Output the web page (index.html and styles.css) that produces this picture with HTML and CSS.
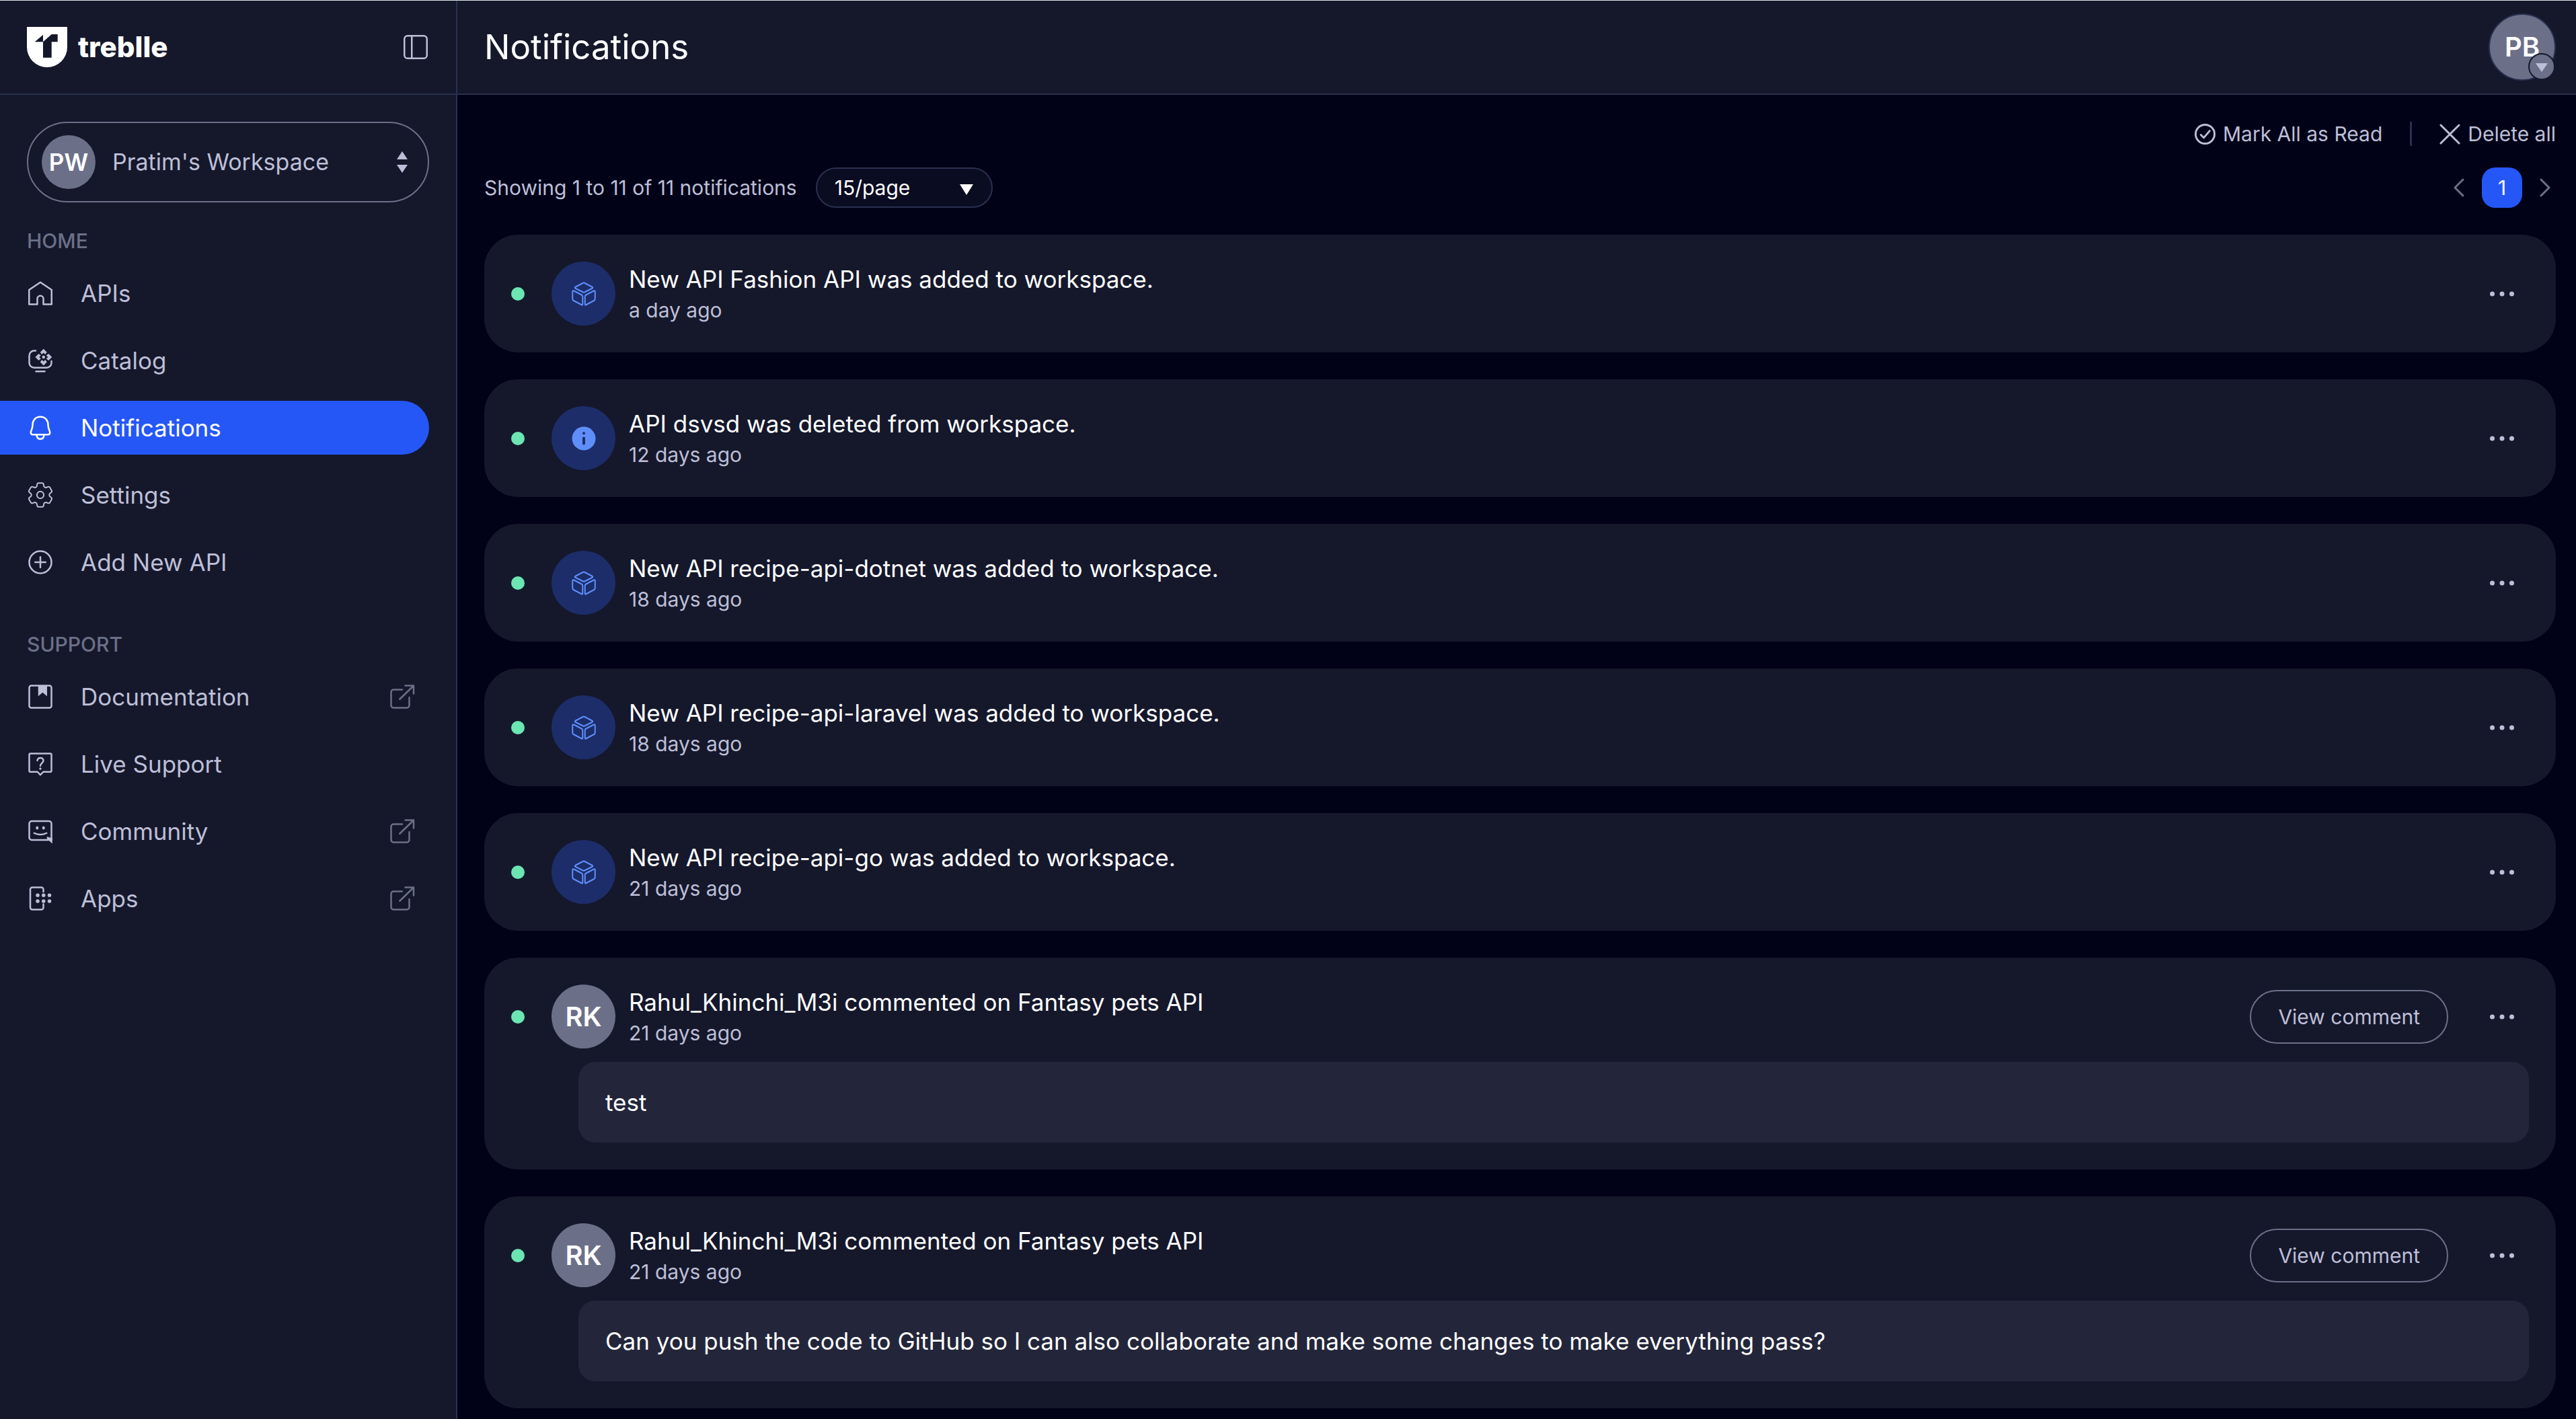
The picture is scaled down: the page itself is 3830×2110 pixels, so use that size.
FILE: index.html
```html
<!DOCTYPE html>
<html lang="en">
<head>
<meta charset="utf-8">
<title>Notifications - Treblle</title>
<link rel="stylesheet" href="styles.css">
</head>
<body>
<svg class="sprite" aria-hidden="true">
  <symbol id="i-home" viewBox="0 0 16 16"><path d="M8 1.5 14.7 6v8.6H9.8v-3.3a1.8 1.8 0 0 0-3.6 0v3.3H1.3V6Z"/></symbol>
  <symbol id="i-catalog" viewBox="0 0 16 16"><path d="M5.2 2.2H4.3a2.9 2.9 0 0 0-2.9 2.9v4.3a2.9 2.9 0 0 0 2.9 2.9h7.4a2.9 2.9 0 0 0 2.9-2.9V8.4M5.4 14.5h5.2"/><g class="solid"><path d="m9.9 1.1 2 2-1 1.3-1-1-1 1-1-1.3ZM9.900 11l2-2.100-1-1.300-1 1-1-1-1 1.300ZM5 6l2-2 1.300 1-1 1 1 1L7 8ZM14.900 6l-2-2-1.400 1 1 1-1 1 1.400 1Z"/><circle cx="9.900" cy="6" r=".9"/></g></symbol>
  <symbol id="i-bell" viewBox="0 0 16 16"><path d="M8 1.5C5 1.5 3.4 3.7 3.4 6.3c0 2.5-1.1 3.5-1.1 4.6 0 .7.5 1.2 1.2 1.2h9c.7 0 1.2-.5 1.2-1.2 0-1.1-1.1-2.1-1.1-4.6C12.6 3.7 11 1.5 8 1.5ZM5.9 12.9c.2 1.1 1.1 1.8 2.1 1.8s1.900-.7 2.100-1.800"/></symbol>
  <symbol id="i-gear" viewBox="1.9 1.9 20.200 20.200"><path d="M9.594 3.94c.09-.542.56-.94 1.11-.94h2.593c.55 0 1.02.398 1.11.94l.213 1.281c.063.374.313.686.645.87.074.04.147.083.22.127.325.196.72.257 1.075.124l1.217-.456a1.125 1.125 0 0 1 1.37.49l1.296 2.247a1.125 1.125 0 0 1-.26 1.431l-1.003.827c-.293.241-.438.613-.43.992a7.723 7.723 0 0 1 0 .255c-.008.378.137.75.43.991l1.004.827c.424.35.534.955.26 1.43l-1.298 2.247a1.125 1.125 0 0 1-1.369.491l-1.217-.456c-.355-.133-.75-.072-1.076.124a6.47 6.47 0 0 1-.22.128c-.331.183-.581.495-.644.869l-.213 1.281c-.09.543-.56.94-1.11.94h-2.594c-.55 0-1.019-.398-1.11-.94l-.213-1.281c-.062-.374-.312-.686-.644-.87a6.52 6.52 0 0 1-.22-.127c-.325-.196-.72-.257-1.076-.124l-1.217.456a1.125 1.125 0 0 1-1.369-.49l-1.297-2.247a1.125 1.125 0 0 1 .26-1.431l1.004-.827c.292-.24.437-.613.43-.991a6.932 6.932 0 0 1 0-.255c.007-.38-.138-.751-.43-.992l-1.004-.827a1.125 1.125 0 0 1-.26-1.43l1.297-2.247a1.125 1.125 0 0 1 1.37-.491l1.216.456c.356.133.751.072 1.076-.124.072-.044.146-.086.22-.128.332-.183.582-.495.644-.869l.214-1.28Z"/><circle cx="12" cy="12" r="2.6"/></symbol>
  <symbol id="i-plus" viewBox="0 0 16 16"><circle cx="8" cy="8" r="6.600"/><path d="M8 4.900v6.200M4.900 8h6.200"/></symbol>
  <symbol id="i-doc" viewBox="0 0 16 16"><rect x="1.400" y="1.400" width="13.200" height="13.200" rx="1.200"/><path class="solid" d="M6.700 1.200H12v6.500L9.350 5.500 6.700 7.700Z"/></symbol>
  <symbol id="i-help" viewBox="0 0 16 16"><path d="M2 1.800h12a.6.6 0 0 1 .6.6v9.700a.6.6 0 0 1-.6.600H9.700L8 14.500l-1.700-1.800H2a.6.6 0 0 1-.6-.6V2.400a.6.6 0 0 1 .6-.6Z"/><path d="M6.200 6C6.300 4.900 7 4.400 8 4.400s1.800.6 1.800 1.600C9.800 7.400 8 7.500 8 9.100"/><circle class="solid" cx="8" cy="10.800" r=".7"/></symbol>
  <symbol id="i-chat" viewBox="0 0 16 16"><path d="M14.600 13.200V3.500A1.500 1.500 0 0 0 13.100 2H2.900a1.500 1.500 0 0 0-1.500 1.500v8.200a1.500 1.500 0 0 0 1.500 1.500h9.800M4.300 9.100c2.200 1.200 5.200 1.200 7.400 0"/><g class="solid"><ellipse cx="6.100" cy="6" rx=".8" ry="1"/><ellipse cx="9.900" cy="6" rx=".8" ry="1"/><path d="m11.900 11.200 3.200 1v3.200l-3.200-2.900Z"/></g></symbol>
  <symbol id="i-apps" viewBox="0 0 16 16"><path d="M9.800 4V2.600a1.200 1.200 0 0 0-1.200-1.200H3.200A1.200 1.200 0 0 0 2 2.600v10.800a1.200 1.200 0 0 0 1.200 1.200h5.400a1.200 1.200 0 0 0 1.200-1.200v-2"/><g class="solid"><circle cx="6.400" cy="6.100" r="1.100"/><circle cx="9.900" cy="6.100" r="1.100"/><circle cx="13.400" cy="6.100" r="1.100"/><circle cx="6.400" cy="9.600" r="1.100"/><circle cx="9.900" cy="9.600" r="1.100"/><circle cx="13.400" cy="9.600" r="1.100"/></g></symbol>
  <symbol id="i-ext" viewBox="0 0 16 16"><path d="M8 3.800H2.800a1.400 1.400 0 0 0-1.400 1.400v8a1.400 1.400 0 0 0 1.400 1.400h8a1.400 1.400 0 0 0 1.400-1.400V8.400M6.500 9.500l8.200-8M9.800 1.400h5v4.800"/></symbol>
  <symbol id="i-panel" viewBox="0 0 16 16"><rect x="1.300" y="1.300" width="13.400" height="13.400" rx="1.900"/><path d="M5.700 1.300v13.400"/></symbol>
  <symbol id="i-cube" viewBox="0 0 16 16"><path d="M7.600 1.500q.4-.2.800 0l4.600 2.400q.6.400 0 .8L8.400 7q-.4.200-.8 0L3 4.700q-.6-.4 0-.8ZM2.100 6.200l4.600 2.400q.6.300.6.900v4.600q0 .7-.6.400l-4.600-2.400q-.8-.4-.8-1.200V6.700q0-.8.800-.5ZM13.900 6.200 9.300 8.600q-.6.300-.6.900v4.600q0 .7.600.4l4.600-2.400q.8-.4.800-1.200V6.700q0-.8-.8-.5Z"/></symbol>
  <symbol id="i-info" viewBox="0 0 16 16"><circle class="solid" cx="8" cy="8" r="7"/><g class="cutout"><circle cx="8" cy="4.900" r=".8"/><rect x="7.200" y="7" width="1.600" height="4.800" rx=".8"/></g></symbol>
  <symbol id="i-dots" viewBox="0 0 16 16"><g class="solid"><circle cx="2.200" cy="8" r="1.400"/><circle cx="8" cy="8" r="1.400"/><circle cx="13.800" cy="8" r="1.400"/></g></symbol>
</svg>

<div class="app">
  <aside class="sidebar">
    <div class="brand">
      <a class="logo" href="#">
        <svg class="logo-mark" viewBox="0 0 60 60" aria-hidden="true"><path fill="#fff" d="M0 0h60v30a30 30 0 0 1-60 0Z"/><path fill="#15182b" d="M24 45.700V22.300L36.700 11h9v11.300h-9v23.400ZM11.700 22.300 24 11.700v10.600Z"/></svg>
        <span>treblle</span>
      </a>
      <button class="bare" type="button" aria-label="Collapse sidebar"><svg class="icon"><use href="#i-panel"/></svg></button>
    </div>
    <div class="side-body">
      <button class="workspace" type="button">
        <span class="avatar avatar-ws">PW</span>
        <span class="workspace-name">Pratim's Workspace</span>
        <svg class="updown" viewBox="0 0 16 32" aria-hidden="true"><path d="M8 0l8 12H0ZM8 32l8-12H0Z"/></svg>
      </button>
      <nav>
        <h2 class="group-title">HOME</h2>
        <ul class="menu">
          <li><a class="item" href="#"><svg class="icon"><use href="#i-home"/></svg><span class="label">APIs</span></a></li>
          <li><a class="item" href="#"><svg class="icon"><use href="#i-catalog"/></svg><span class="label">Catalog</span></a></li>
          <li><a class="item active" href="#" aria-current="page"><svg class="icon"><use href="#i-bell"/></svg><span class="label">Notifications</span></a></li>
          <li><a class="item" href="#"><svg class="icon"><use href="#i-gear"/></svg><span class="label">Settings</span></a></li>
          <li><a class="item" href="#"><svg class="icon"><use href="#i-plus"/></svg><span class="label">Add New API</span></a></li>
        </ul>
        <h2 class="group-title group-title-next">SUPPORT</h2>
        <ul class="menu">
          <li><a class="item" href="#"><svg class="icon"><use href="#i-doc"/></svg><span class="label">Documentation</span><svg class="icon ext"><use href="#i-ext"/></svg></a></li>
          <li><a class="item" href="#"><svg class="icon"><use href="#i-help"/></svg><span class="label">Live Support</span></a></li>
          <li><a class="item" href="#"><svg class="icon"><use href="#i-chat"/></svg><span class="label">Community</span><svg class="icon ext"><use href="#i-ext"/></svg></a></li>
          <li><a class="item" href="#"><svg class="icon"><use href="#i-apps"/></svg><span class="label">Apps</span><svg class="icon ext"><use href="#i-ext"/></svg></a></li>
        </ul>
      </nav>
    </div>
  </aside>

  <div class="page">
    <header class="topbar">
      <h1>Notifications</h1>
      <button class="profile" type="button" aria-label="Account menu">
        <span class="avatar avatar-user">PB</span>
        <svg class="profile-badge" viewBox="0 0 40 40" aria-hidden="true"><circle cx="20" cy="20" r="19" fill="#6b7088" stroke="#15182b" stroke-width="2"/><path fill="#bdbfd8" d="M11 15h18l-9 13Z"/></svg>
      </button>
    </header>

    <main class="content">
      <div class="actions">
        <button class="action" type="button"><svg class="action-icon" viewBox="0 0 32 32" aria-hidden="true"><circle cx="16" cy="16" r="14.500"/><path d="m9.500 17 4.500 4.500 9-10.500"/></svg>Mark All as Read</button>
        <span class="divider"></span>
        <button class="action" type="button"><svg class="action-icon" viewBox="0 0 32 32" aria-hidden="true"><path d="M2 2l28 28M30 2L2 30"/></svg>Delete all</button>
      </div>
      <div class="listing">
        <label for="per-page">Showing 1 to 11 of 11 notifications</label>
        <div class="select">
          <select id="per-page"><option>15/page</option><option>30/page</option></select>
          <svg class="caret" viewBox="0 0 20 16" aria-hidden="true"><path d="M0 0h20L10 16Z"/></svg>
        </div>
        <div class="pager">
          <button class="bare" type="button" aria-label="Previous page"><svg class="chevron" viewBox="0 0 16 28"><path d="M14 2 2 14l12 12"/></svg></button>
          <button class="current" type="button">1</button>
          <button class="bare" type="button" aria-label="Next page"><svg class="chevron" viewBox="0 0 16 28"><path d="m2 2 12 12L2 26"/></svg></button>
        </div>
      </div>

      <div class="cards">
        <article class="card"><div class="row"><span class="dot"></span><span class="avatar kind"><svg class="icon"><use href="#i-cube"/></svg></span><div class="text"><p class="title">New API Fashion API was added to workspace.</p><p class="time">a day ago</p></div><button class="bare" type="button" aria-label="More"><svg class="icon"><use href="#i-dots"/></svg></button></div></article>
        <article class="card"><div class="row"><span class="dot"></span><span class="avatar kind"><svg class="icon"><use href="#i-info"/></svg></span><div class="text"><p class="title">API dsvsd was deleted from workspace.</p><p class="time">12 days ago</p></div><button class="bare" type="button" aria-label="More"><svg class="icon"><use href="#i-dots"/></svg></button></div></article>
        <article class="card"><div class="row"><span class="dot"></span><span class="avatar kind"><svg class="icon"><use href="#i-cube"/></svg></span><div class="text"><p class="title">New API recipe-api-dotnet was added to workspace.</p><p class="time">18 days ago</p></div><button class="bare" type="button" aria-label="More"><svg class="icon"><use href="#i-dots"/></svg></button></div></article>
        <article class="card"><div class="row"><span class="dot"></span><span class="avatar kind"><svg class="icon"><use href="#i-cube"/></svg></span><div class="text"><p class="title">New API recipe-api-laravel was added to workspace.</p><p class="time">18 days ago</p></div><button class="bare" type="button" aria-label="More"><svg class="icon"><use href="#i-dots"/></svg></button></div></article>
        <article class="card"><div class="row"><span class="dot"></span><span class="avatar kind"><svg class="icon"><use href="#i-cube"/></svg></span><div class="text"><p class="title">New API recipe-api-go was added to workspace.</p><p class="time">21 days ago</p></div><button class="bare" type="button" aria-label="More"><svg class="icon"><use href="#i-dots"/></svg></button></div></article>
        <article class="card"><div class="row"><span class="dot"></span><span class="avatar">RK</span><div class="text"><p class="title">Rahul_Khinchi_M3i commented on Fantasy pets API</p><p class="time">21 days ago</p></div><button class="view" type="button">View comment</button><button class="bare" type="button" aria-label="More"><svg class="icon"><use href="#i-dots"/></svg></button></div><p class="comment">test</p></article>
        <article class="card"><div class="row"><span class="dot"></span><span class="avatar">RK</span><div class="text"><p class="title">Rahul_Khinchi_M3i commented on Fantasy pets API</p><p class="time">21 days ago</p></div><button class="view" type="button">View comment</button><button class="bare" type="button" aria-label="More"><svg class="icon"><use href="#i-dots"/></svg></button></div><p class="comment">Can you push the code to GitHub so I can also collaborate and make some changes to make everything pass?</p></article>
      </div>
    </main>
  </div>
</div>
</body>
</html>
```
FILE: styles.css
```css
:root {
  --bg: #010217;
  --panel: #15182b;
  --panel-raised: #23263a;
  --line: #2a3050;
  --muted: #6b7088;
  --text: #bdbfd8;
  --blue: #2557f7;
}

* { box-sizing: border-box; }

body {
  margin: 0;
  border-top: 1px solid #dbe7e3;
  background: var(--bg);
  color: var(--text);
  font-family: Inter, "Liberation Sans", sans-serif;
  font-size: 35px;
  line-height: 40px;
}

h1, h2, p, ul { margin: 0; padding: 0; font-weight: 400; }
ul { list-style: none; }
a { color: inherit; text-decoration: none; }
button, select { font: inherit; color: inherit; background: none; border: 0; margin: 0; padding: 0; }
svg { display: block; flex: none; }

.sprite { position: absolute; width: 0; height: 0; }

.icon {
  width: 40px;
  height: 40px;
  fill: none;
  stroke: currentColor;
  stroke-linecap: round;
  stroke-linejoin: round;
}
.solid { fill: currentColor; stroke: none; }
.cutout { fill: #1c2d69; stroke: none; }

.app {
  display: grid;
  grid-template-columns: 680px minmax(0, 1fr);
  min-height: calc(100vh - 1px);
}

/* Sidebar */
.sidebar { background: var(--panel); border-right: 2px solid var(--line); }

.brand {
  display: flex;
  align-items: center;
  justify-content: space-between;
  height: 140px;
  padding: 0 40px;
  border-bottom: 2px solid var(--line);
}
.logo {
  display: flex;
  align-items: center;
  gap: 16px;
  color: #fff;
  font-size: 42px;
  font-weight: 800;
}
.logo-mark { width: 60px; height: 60px; }

.side-body { padding: 40px 40px 40px 0; }

.workspace {
  display: flex;
  align-items: center;
  width: calc(100% - 40px);
  height: 120px;
  margin-left: 40px;
  padding: 0 30px 0 20px;
  border: 2px solid var(--muted);
  border-radius: 60px;
  text-align: left;
}
.workspace-name { flex: 1; margin-left: 25px; font-size: 34px; }
.updown { width: 16px; height: 32px; fill: currentColor; }

.group-title {
  margin: 39px 0 20px 40px;
  color: var(--muted);
  font-size: 30px;
  font-weight: 500;
  line-height: 36px;
}
.group-title-next { margin-top: 64px; }

.menu { display: flex; flex-direction: column; gap: 20px; }
.item {
  display: flex;
  align-items: center;
  gap: 40px;
  height: 80px;
  padding: 0 20px 0 40px;
  border-radius: 0 40px 40px 0;
}
.label { flex: 1; }
.item.active { background: var(--blue); color: #fff; }
.ext { color: var(--muted); }

/* Top bar */
.topbar {
  display: flex;
  align-items: center;
  justify-content: space-between;
  height: 140px;
  padding: 0 30px 0 40px;
  border-bottom: 2px solid var(--line);
  background: var(--panel);
}
.topbar h1 { color: #fff; font-size: 51px; line-height: 60px; }

.avatar {
  display: flex;
  flex: none;
  align-items: center;
  justify-content: center;
  width: 95px;
  height: 95px;
  border-radius: 50%;
  background: var(--muted);
  color: #fff;
  font-size: 40px;
  font-weight: 600;
}
.avatar-ws { width: 80px; height: 80px; font-size: 35px; }
.avatar-user { width: 100px; height: 100px; border: 2px solid var(--line); }
.kind { background: #1c2d69; color: #5f8ef9; }
.kind .icon { stroke-width: 0.8px; }

.profile { position: relative; }
.profile-badge { position: absolute; right: 1px; bottom: 1px; width: 40px; height: 40px; }

/* Notification list */
.content { padding: 40px 30px 0 40px; }

.actions {
  display: flex;
  justify-content: flex-end;
  gap: 41px;
  font-size: 30px;
  line-height: 36px;
}
.action { display: flex; align-items: center; gap: 11px; }
.action-icon { width: 31px; height: 31px; fill: none; stroke: currentColor; stroke-width: 3px; stroke-linecap: round; stroke-linejoin: round; }
.divider { width: 3px; background: var(--line); }

.listing {
  display: flex;
  align-items: center;
  gap: 28px;
  margin: 32px 0 40px;
  font-size: 30px;
}
.select { display: grid; align-items: center; width: 263px; height: 60px; }
.select > * { grid-area: 1 / 1; }
.select select {
  width: 100%;
  height: 100%;
  padding: 0 26px;
  border: 2px solid var(--line);
  border-radius: 30px;
  background: #0a0c22;
  color: #fff;
  appearance: none;
}
.caret { justify-self: end; width: 20px; height: 16px; margin: 6px 29px 0 0; fill: #fff; pointer-events: none; }

.pager { display: flex; align-items: center; gap: 26px; margin-left: auto; padding-right: 8px; }
.current { width: 60px; height: 60px; border-radius: 20px; background: var(--blue); color: #fff; }
.chevron { width: 16px; height: 28px; fill: none; stroke: var(--muted); stroke-width: 3px; stroke-linecap: round; stroke-linejoin: round; }

.cards { display: grid; gap: 40px; }
.card { padding: 40px; border-radius: 50px; background: var(--panel); }
.row { display: flex; align-items: center; height: 95px; padding-right: 20px; }
.dot { flex: none; width: 20px; height: 20px; margin-right: 40px; border-radius: 50%; background: #6be6b3; }
.text { flex: 1; margin-left: 20px; }
.title { color: #fff; line-height: 48px; }
.time { font-size: 30px; line-height: 44px; }
.view {
  height: 80px;
  margin-right: 60px;
  padding: 0 40px;
  border: 2px solid var(--muted);
  border-radius: 40px;
  font-size: 30px;
}
.comment {
  margin: 20px 0 0 100px;
  padding: 40px;
  border-radius: 25px;
  background: var(--panel-raised);
  color: #fff;
}
```
